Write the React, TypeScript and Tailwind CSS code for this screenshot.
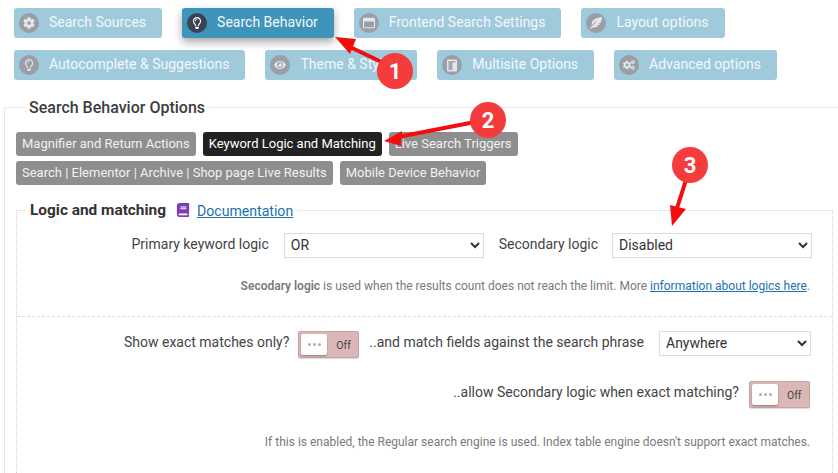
import type { ReactNode } from 'react';
import { FaBook, FaCog, FaCogs, FaEye, FaFeatherAlt, FaRegLightbulb, FaRegWindowMaximize } from 'react-icons/fa';

type Tab = { label: string; icon: ReactNode; active?: boolean };

function MultisiteIcon() {
  return (
    <svg width="12" height="13" viewBox="0 0 12 13" fill="none">
      <rect x="1" y="0.5" width="10" height="12" rx="1" fill="#e4e6e8" />
      <rect x="2.5" y="2" width="4" height="9" fill="#a6a9af" />
      <rect x="2.5" y="2" width="7" height="1.5" fill="#a6a9af" />
    </svg>
  );
}

const rowOne: Tab[] = [
  { label: 'Search Sources', icon: <FaCog /> },
  { label: 'Search Behavior', icon: <FaRegLightbulb />, active: true },
  { label: 'Frontend Search Settings', icon: <FaRegWindowMaximize /> },
  { label: 'Layout options', icon: <FaFeatherAlt /> },
];

const rowTwo: Tab[] = [
  { label: 'Autocomplete & Suggestions', icon: <FaRegLightbulb /> },
  { label: 'Theme & Styling', icon: <FaEye /> },
  { label: 'Multisite Options', icon: <MultisiteIcon /> },
  { label: 'Advanced options', icon: <FaCogs /> },
];

function MainTab({ label, icon, active }: Tab) {
  return (
    <div
      className={`flex h-[30px] items-center rounded-[3px] pl-[5px] pr-[16px] text-[14px] text-[#f2f8fb] ${
        active ? 'bg-[#3f94b9] shadow-[0_4px_8px_rgba(0,0,0,0.35)]' : 'bg-[#9fcadb]'
      }`}
    >
      <span
        className={`mr-[10px] flex h-5 w-5 items-center justify-center rounded-full text-[12px] ${
          active ? 'bg-[#3a4356] text-white' : 'bg-[#9a9ea6] text-[#e4e6e8]'
        }`}
      >
        {icon}
      </span>
      <span className="pb-[2px]">{label}</span>
    </div>
  );
}

function SubTab({ label, active }: { label: string; active?: boolean }) {
  return (
    <div
      className={`flex h-6 items-center rounded-[3px] px-[6px] text-[13px] ${
        active ? 'bg-[#222222] text-white' : 'bg-[#8e8e8e] text-[#f1f1f1]'
      }`}
    >
      {label}
    </div>
  );
}

function Toggle() {
  return (
    <div className="flex h-[27px] w-[61px] shrink-0 items-center rounded-[2px] border border-[#c9a3a3] bg-[#dcb7b7] pl-[2px] shadow-[0_1px_1px_rgba(0,0,0,0.15)]">
      <div className="flex h-[21px] w-[26px] items-center justify-center gap-[2px] rounded-[2px] bg-white shadow-[0_1px_2px_rgba(0,0,0,0.35)]">
        <span className="h-[3px] w-[3px] rounded-full bg-[#b0b0b0]" />
        <span className="h-[3px] w-[3px] rounded-full bg-[#b0b0b0]" />
        <span className="h-[3px] w-[3px] rounded-full bg-[#b0b0b0]" />
      </div>
      <span className="ml-[9px] mt-[3px] text-[10.5px] text-[#444]">Off</span>
    </div>
  );
}

function Select({ value, width }: { value: string; width: string }) {
  return (
    <select
      defaultValue={value}
      className={`h-[25px] border border-[#dddddd] bg-white pb-[2px] pl-[2px] text-[14px] text-[#333] ${width}`}
    >
      <option>{value}</option>
    </select>
  );
}

function Annotations() {
  return (
    <>
      <svg className="pointer-events-none absolute left-0 top-0" width="838" height="473" viewBox="0 0 838 473" fill="none">
        <path d="M390 66 L350 47" stroke="#f40d0d" strokeWidth="4" />
        <path d="M335 37 L356 39 L350 54 Z" fill="#f40d0d" />
        <path d="M475 122 L398 137" stroke="#f40d0d" strokeWidth="4" />
        <path d="M384 141 L402 131 L401 146 Z" fill="#f40d0d" />
        <path d="M686 180 L677 208" stroke="#f40d0d" strokeWidth="4" />
        <path d="M672 226 L670 205 L686 209 Z" fill="#f40d0d" />
      </svg>
      <Badge className="left-[377px] top-[53px]" n="1" />
      <Badge className="left-[470px] top-[102px]" n="2" />
      <Badge className="left-[672px] top-[147px]" n="3" />
    </>
  );
}

function Badge({ n, className }: { n: string; className: string }) {
  return (
    <div
      className={`absolute flex h-9 w-9 items-center justify-center rounded-full bg-[#f43c3c] text-[22px] font-bold text-white ${className}`}
    >
      {n}
    </div>
  );
}

export default function App() {
  return (
    <div className="relative h-[473px] w-[838px] overflow-hidden bg-white font-['Roboto',sans-serif] text-[14px] text-[#444]">
      <div className="flex flex-col gap-3 pl-[14px] pt-2">
        <div className="flex gap-5">
          {rowOne.map(t => <MainTab key={t.label} {...t} />)}
        </div>
        <div className="flex gap-5">
          {rowTwo.map(t => <MainTab key={t.label} {...t} />)}
        </div>
      </div>

      <fieldset className="ml-1 mt-[16px] w-[850px] border border-[#e8e8e8] p-0 pb-[80px]">
        <legend className="ml-[20px] px-[4px] pt-[1px] text-[16px] font-medium leading-[21px] text-[#3c3c3c]">
          Search Behavior Options
        </legend>
        <div className="pl-[11px] pt-[14px]">
          <div className="flex flex-col gap-[5px]">
            <div className="flex gap-[7px]">
              <SubTab label="Magnifier and Return Actions" />
              <SubTab label="Keyword Logic and Matching" active />
              <SubTab label="Live Search Triggers" />
            </div>
            <div className="flex gap-[7px]">
              <SubTab label="Search | Elementor | Archive | Shop page Live Results" />
              <SubTab label="Mobile Device Behavior" />
            </div>
          </div>

          <fieldset className="mt-[14px] w-[817px] border border-dotted border-[#cfcfcf] p-0 pb-[60px]">
            <legend className="ml-[9px] flex items-center px-[4px] leading-5">
              <span className="text-[15.4px] font-bold text-[#333]">Logic and matching</span>
              <FaBook className="ml-[10px] text-[14px] text-[#7d3cb5]" />
              <a className="ml-[7px] mt-[2px] text-[14.1px] text-[#2271b1] underline">Documentation</a>
            </legend>

            <div className="flex items-start justify-end pr-[20px] pt-[12px]">
              <span className="mr-[15px] pt-[1px]">Primary keyword logic</span>
              <Select value="OR" width="w-[200px]" />
              <span className="ml-[15px] mr-[14px] pt-[1px]">Secondary logic</span>
              <Select value="Disabled" width="w-[200px]" />
            </div>
            <p className="pr-[22px] pt-[20px] text-right text-[12px] leading-[16px] text-[#7a7a7a]">
              <b className="font-semibold">Secodary logic</b> is used when the results count does not reach the limit. More{' '}
              <a className="text-[#2271b1] underline">information about logics here</a>.
            </p>

            <div className="mt-[22px] border-t border-dashed border-[#dddddd] pr-[21px]">
              <div className="flex items-start justify-end pt-[14px]">
                <span className="mr-[9px] pt-[1px]">Show exact matches only?</span>
                <Toggle />
                <span className="ml-[10px] mr-[15px] pt-[1px]">..and match fields against the search phrase</span>
                <Select value="Anywhere" width="w-[152px]" />
              </div>
              <div className="flex items-start justify-end pr-[1px] pt-[23px]">
                <span className="mr-[10px] pt-[1px]">..allow Secondary logic when exact matching?</span>
                <Toggle />
              </div>
              <p className="pr-[1px] pt-[26px] text-right text-[12px] leading-[16px] text-[#7a7a7a]">
                If this is enabled, the Regular search engine is used. Index table engine doesn't support exact matches.
              </p>
            </div>
          </fieldset>
        </div>
      </fieldset>

      <Annotations />
    </div>
  );
}
